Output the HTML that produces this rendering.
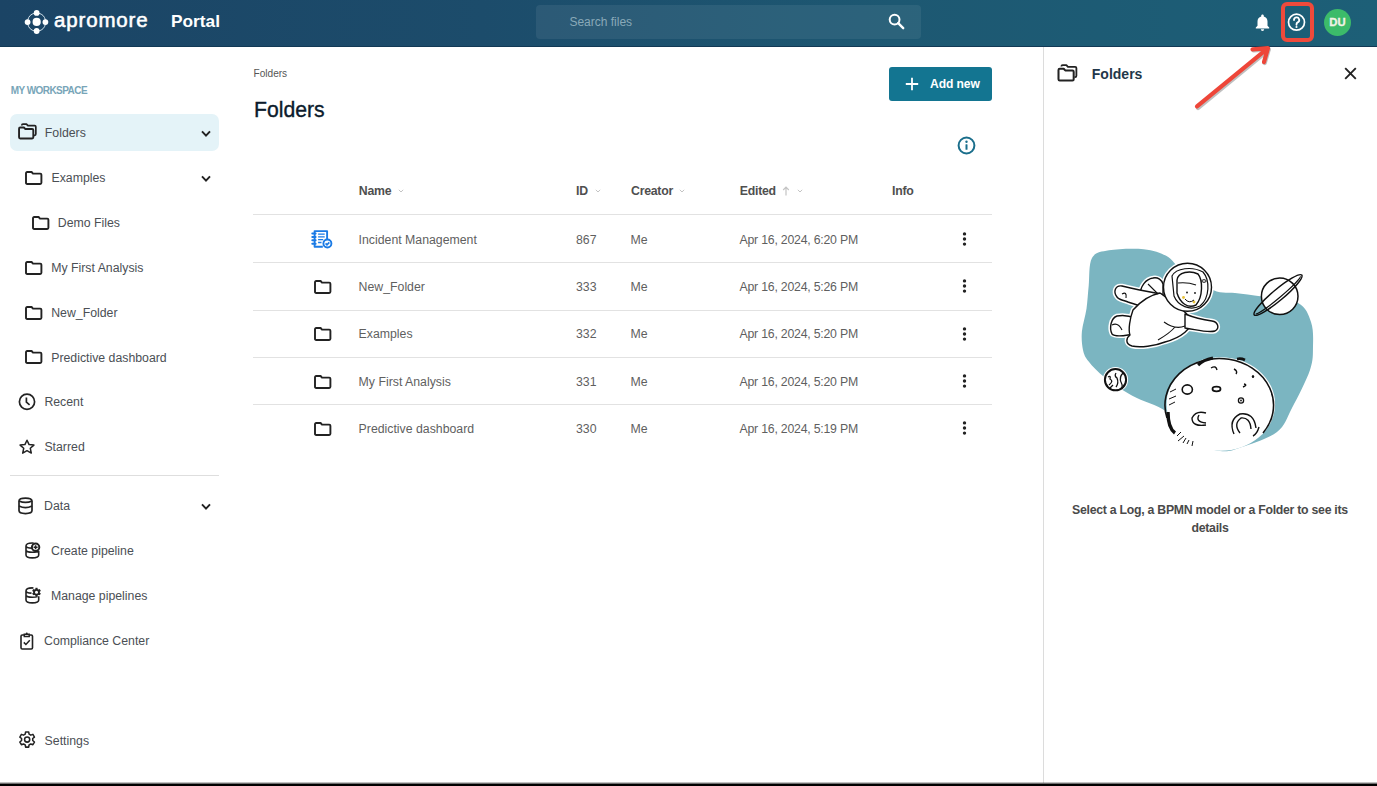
<!DOCTYPE html>
<html><head><meta charset="utf-8">
<style>
*{box-sizing:border-box;margin:0;padding:0}
html,body{width:1377px;height:786px;overflow:hidden;background:#fff;font-family:"Liberation Sans",sans-serif;color:#4a4a4a}
.abs{position:absolute}
#hdr{position:absolute;left:0;top:0;width:1377px;height:46.6px;background:linear-gradient(90deg,#1b4465 0%,#1c4c6b 35%,#1d5872 65%,#1d5f77 100%);border-bottom:1.3px solid #123955}
.t{position:absolute;white-space:nowrap;line-height:1}
svg{position:absolute;overflow:visible}
.st{position:absolute;white-space:nowrap;line-height:1;font-size:12.3px;color:#4b4f55}
.row-line{position:absolute;left:253px;width:739px;height:1px;background:#e2e2e2}
.cell{position:absolute;white-space:nowrap;line-height:1;font-size:12.3px;color:#5f5f5f}
.th{position:absolute;white-space:nowrap;line-height:1;font-size:12.3px;font-weight:700;color:#4f4f4f;letter-spacing:-0.25px}
.car{position:absolute}
</style></head><body>
<div id="hdr"></div>
<svg style="left:0;top:0" width="60" height="46" viewBox="0 0 60 46">
  <g fill="none" stroke="#d0e0ea" stroke-width="1">
    <path d="M38.6 13.2A9 9 0 0 1 45.4 20"/><path d="M45.4 24.2A9 9 0 0 1 38.6 31"/>
    <path d="M34.7 31A9 9 0 0 1 27.8 24.2"/><path d="M27.8 20A9 9 0 0 1 34.7 13.2"/>
  </g>
  <g fill="#fff">
    <circle cx="36.65" cy="21.9" r="4.1"/><circle cx="36.65" cy="12.9" r="2.9"/><circle cx="36.65" cy="31" r="2.9"/>
    <circle cx="27.6" cy="22.1" r="2.9"/><circle cx="45.4" cy="22.1" r="2.9"/>
  </g>
</svg>
<div class="t" style="left:54px;top:10px;font-size:20.5px;color:#fff;letter-spacing:0.85px;-webkit-text-stroke:0.55px #fff">apromore</div>
<div class="t" style="left:171px;top:13.1px;font-size:17.3px;font-weight:700;color:#fff">Portal</div>
<div class="abs" style="left:536px;top:5px;width:385px;height:34px;background:rgba(255,255,255,0.07);border-radius:4px"></div>
<div class="t" style="left:569.4px;top:16px;font-size:12px;color:#89a9b8">Search files</div>
<svg style="left:888px;top:13px" width="17" height="17" viewBox="0 0 17 17"><circle cx="6.6" cy="6.6" r="4.9" fill="none" stroke="#fff" stroke-width="2"/><path d="M10.2 10.2L15.2 15.2" stroke="#fff" stroke-width="2.4" stroke-linecap="round"/></svg>
<svg style="left:1255px;top:13.5px" width="15" height="18" viewBox="0 0 15 18"><path d="M7.5 0.6C6.7 0.6 6.2 1.2 6.2 1.9V2.5C3.8 3.1 2.5 5.2 2.5 7.6V11.8L0.8 13.6V14.4H14.2V13.6L12.5 11.8V7.6C12.5 5.2 11.2 3.1 8.8 2.5V1.9C8.8 1.2 8.3 0.6 7.5 0.6Z" fill="#fff"/><path d="M5.8 15.3H9.2A1.7 1.7 0 0 1 5.8 15.3Z" fill="#fff"/></svg>
<svg style="left:1287px;top:13px" width="19" height="19" viewBox="0 0 19 19"><circle cx="9.5" cy="9.2" r="8" fill="none" stroke="#fff" stroke-width="1.7"/><path d="M7 7.1A2.6 2.6 0 1 1 10.7 9.4C9.9 9.8 9.5 10.3 9.5 11.2V11.8" fill="none" stroke="#fff" stroke-width="1.8" stroke-linecap="round"/><circle cx="9.5" cy="14" r="1.05" fill="#fff"/></svg>
<div class="abs" style="left:1280.5px;top:1.8px;width:33px;height:40px;border:4.6px solid #ef4a3b;border-radius:6px"></div>
<div class="abs" style="left:1324px;top:8.7px;width:27px;height:27px;border-radius:50%;background:#3cbb6a"></div>
<div class="t" style="left:1324px;top:16.5px;width:27px;text-align:center;font-size:11.3px;font-weight:700;color:#f2f2e6;-webkit-text-stroke:0.3px #f2f2e6">DU</div>

<div class="t" style="left:10.7px;top:85.6px;font-size:10px;font-weight:700;color:#78a5b8;letter-spacing:-0.55px">MY WORKSPACE</div>
<div class="abs" style="left:10px;top:113.5px;width:208.5px;height:37px;background:#e4f3f8;border-radius:7px"></div>
<svg style="left:18px;top:123px" width="19" height="17" viewBox="0 0 18 16"><path d="M1 13.5V5.3Q1 4.2 2.1 4.2H5.6L7 5.7H13.4Q14.5 5.7 14.5 6.8V13.5Q14.5 14.6 13.4 14.6H2.1Q1 14.6 1 13.5Z" fill="none" stroke="#222" stroke-width="1.8" stroke-linejoin="round"/><path d="M3.6 2.3V2.1Q3.6 1 4.7 1H8L9.4 2.5H15.8Q16.9 2.5 16.9 3.6V10.4Q16.9 11.6 15.8 11.6H15.2" fill="none" stroke="#222" stroke-width="1.6" stroke-linejoin="round"/></svg>
<div class="st" style="left:44.8px;top:127.0px">Folders</div>
<svg style="left:200.5px;top:129.5px" width="10" height="7" viewBox="0 0 10 7"><path d="M1 1.3L5 5.6L9 1.3" fill="none" stroke="#222" stroke-width="1.9"/></svg>
<svg style="left:24.5px;top:170.5px" width="18" height="14" viewBox="0 0 18 14"><path d="M1 11.8V2.2Q1 1 2.2 1H6.6L8 2.6H15.2Q16.4 2.6 16.4 3.8V11.8Q16.4 13 15.2 13H2.2Q1 13 1 11.8Z" fill="none" stroke="#222" stroke-width="1.9" stroke-linejoin="round"/></svg>
<div class="st" style="left:51.5px;top:172.0px">Examples</div>
<svg style="left:200.5px;top:174.5px" width="10" height="7" viewBox="0 0 10 7"><path d="M1 1.3L5 5.6L9 1.3" fill="none" stroke="#222" stroke-width="1.9"/></svg>
<svg style="left:31.5px;top:215.5px" width="18" height="14" viewBox="0 0 18 14"><path d="M1 11.8V2.2Q1 1 2.2 1H6.6L8 2.6H15.2Q16.4 2.6 16.4 3.8V11.8Q16.4 13 15.2 13H2.2Q1 13 1 11.8Z" fill="none" stroke="#222" stroke-width="1.9" stroke-linejoin="round"/></svg>
<div class="st" style="left:57.8px;top:217.0px">Demo Files</div>
<svg style="left:24.5px;top:260.5px" width="18" height="14" viewBox="0 0 18 14"><path d="M1 11.8V2.2Q1 1 2.2 1H6.6L8 2.6H15.2Q16.4 2.6 16.4 3.8V11.8Q16.4 13 15.2 13H2.2Q1 13 1 11.8Z" fill="none" stroke="#222" stroke-width="1.9" stroke-linejoin="round"/></svg>
<div class="st" style="left:51.2px;top:262.0px">My First Analysis</div>
<svg style="left:24.5px;top:305.5px" width="18" height="14" viewBox="0 0 18 14"><path d="M1 11.8V2.2Q1 1 2.2 1H6.6L8 2.6H15.2Q16.4 2.6 16.4 3.8V11.8Q16.4 13 15.2 13H2.2Q1 13 1 11.8Z" fill="none" stroke="#222" stroke-width="1.9" stroke-linejoin="round"/></svg>
<div class="st" style="left:51.2px;top:307.0px">New_Folder</div>
<svg style="left:24.5px;top:350.0px" width="18" height="14" viewBox="0 0 18 14"><path d="M1 11.8V2.2Q1 1 2.2 1H6.6L8 2.6H15.2Q16.4 2.6 16.4 3.8V11.8Q16.4 13 15.2 13H2.2Q1 13 1 11.8Z" fill="none" stroke="#222" stroke-width="1.9" stroke-linejoin="round"/></svg>
<div class="st" style="left:51.2px;top:351.5px">Predictive dashboard</div>
<svg style="left:18px;top:393px" width="18" height="18" viewBox="0 0 18 18"><circle cx="9" cy="8.8" r="7.6" fill="none" stroke="#222" stroke-width="1.7"/><path d="M8.4 4.6V9.2L11.6 11.8" fill="none" stroke="#222" stroke-width="1.7"/></svg>
<div class="st" style="left:44.4px;top:396.2px">Recent</div>
<svg style="left:18px;top:438.5px" width="18" height="16" viewBox="0 0 18 16"><path d="M9 1.2L11.1 5.6L15.9 6.1L12.3 9.3L13.3 14.1L9 11.7L4.7 14.1L5.7 9.3L2.1 6.1L6.9 5.6Z" fill="none" stroke="#222" stroke-width="1.5" stroke-linejoin="round"/></svg>
<div class="st" style="left:44.4px;top:441.2px">Starred</div>
<div class="abs" style="left:10px;top:475px;width:209px;height:1px;background:#dedede"></div>
<svg style="left:18px;top:497px" width="16" height="18" viewBox="0 0 16 18"><path d="M1 4.1Q1 1.1 7.5 1.1Q14 1.1 14 4.1V13.6Q14 16.6 7.5 16.6Q1 16.6 1 13.6Z" fill="none" stroke="#222" stroke-width="1.7"/><path d="M1 3.9Q7.5 7 14 3.9M1 9Q7.5 12.2 14 9" fill="none" stroke="#222" stroke-width="1.7"/></svg>
<div class="st" style="left:44px;top:500.0px">Data</div>
<svg style="left:200.5px;top:502.5px" width="10" height="7" viewBox="0 0 10 7"><path d="M1 1.3L5 5.6L9 1.3" fill="none" stroke="#222" stroke-width="1.9"/></svg>
<svg style="left:25px;top:542px" width="17" height="17" viewBox="0 0 17 17"><path d="M8.6 1.3Q8 1 7.3 1Q1 1 1 4V13Q1 15.9 7.3 15.9Q13.7 15.9 13.7 13V8.8M1 4.2Q1.5 6 7 6.1M1 8.3Q1.5 10.3 7.3 10.3Q12 10.3 13.7 9" fill="none" stroke="#222" stroke-width="1.6"/><circle cx="10.6" cy="5.2" r="3.7" fill="#fff" stroke="#222" stroke-width="2"/><path d="M10.6 3.2V7.2M8.6 5.2H12.6" stroke="#222" stroke-width="1.5"/></svg>
<div class="st" style="left:51px;top:545.0px">Create pipeline</div>
<svg style="left:25px;top:587px" width="17" height="17" viewBox="0 0 17 17"><path d="M8.4 1.2Q7.8 0.9 7.3 0.9Q1 0.9 1 4V13Q1 15.9 7.3 15.9Q13.7 15.9 13.7 13V9.2M1 4.2Q1.5 6 6.5 6.1M1 8.3Q1.5 10.3 7.3 10.3Q11 10.3 12.5 9.6" fill="none" stroke="#222" stroke-width="1.6"/><g transform="translate(11.5 5.2)"><circle r="3.3" fill="#222"/><rect x="-1.1" y="-4.4" width="2.2" height="8.8" fill="#222"/><rect x="-1.1" y="-4.4" width="2.2" height="8.8" fill="#222" transform="rotate(60)"/><rect x="-1.1" y="-4.4" width="2.2" height="8.8" fill="#222" transform="rotate(120)"/><circle r="1.5" fill="#fff"/></g></svg>
<div class="st" style="left:51px;top:590.0px">Manage pipelines</div>
<svg style="left:19.5px;top:631.5px" width="14" height="18" viewBox="0 0 14 18"><path d="M4 3H2.2Q1 3 1 4.2V15.8Q1 17 2.2 17H11.3Q12.5 17 12.5 15.8V4.2Q12.5 3 11.3 3H9.5" fill="none" stroke="#222" stroke-width="1.6"/><path d="M4.3 2.3H9.2V4.6H4.3Z" fill="none" stroke="#222" stroke-width="1.5"/><circle cx="6.75" cy="1.5" r="1" fill="#222"/><path d="M3.8 10.4L5.9 12.5L9.8 8.3" fill="none" stroke="#222" stroke-width="1.5"/></svg>
<div class="st" style="left:44px;top:635.0px">Compliance Center</div>
<svg style="left:18.8px;top:731px" width="16.3" height="17.3" viewBox="0 0 17 18"><path d="M6.9 1H10.1L10.5 3.3L12.3 4.3L14.5 3.5L16.1 6.3L14.3 7.8V9.9L16.1 11.5L14.5 14.3L12.3 13.5L10.5 14.5L10.1 16.8H6.9L6.5 14.5L4.7 13.5L2.5 14.3L0.9 11.5L2.7 9.9V7.8L0.9 6.3L2.5 3.5L4.7 4.3L6.5 3.3Z" fill="none" stroke="#222" stroke-width="1.6" stroke-linejoin="round"/><circle cx="8.5" cy="8.9" r="2.7" fill="none" stroke="#222" stroke-width="1.6"/></svg>
<div class="st" style="left:44.6px;top:734.9px">Settings</div>

<div class="t" style="left:253.5px;top:69.3px;font-size:10.1px;color:#555">Folders</div>
<div class="t" style="left:254px;top:98.7px;font-size:21.2px;color:#0c1b2c;-webkit-text-stroke:0.35px #0c1b2c">Folders</div>
<div class="abs" style="left:889px;top:67px;width:103px;height:34px;background:#137591;border-radius:3px"></div>
<svg style="left:905px;top:77px" width="14" height="14" viewBox="0 0 14 14"><path d="M7 0.8V13.2M0.8 7H13.2" stroke="#fff" stroke-width="1.8"/></svg>
<div class="t" style="left:930px;top:78.2px;font-size:12.1px;font-weight:700;color:#fff;letter-spacing:-0.1px">Add new</div>
<svg style="left:957px;top:136px" width="19" height="19" viewBox="0 0 19 19"><circle cx="9.5" cy="9.5" r="7.9" fill="none" stroke="#1a6e8b" stroke-width="2"/><rect x="8.5" y="8.2" width="2" height="5.6" rx="0.6" fill="#1a6e8b"/><circle cx="9.5" cy="5.7" r="1.2" fill="#1a6e8b"/></svg>

<div class="th" style="left:358.8px;top:185.4px">Name</div>
<div class="th" style="left:576px;top:185.4px">ID</div>
<div class="th" style="left:631px;top:185.4px">Creator</div>
<div class="th" style="left:739.8px;top:185.4px">Edited</div>
<div class="th" style="left:892px;top:185.4px">Info</div>
<svg style="left:0;top:0" width="1" height="1" viewBox="0 0 1 1"></svg>
<svg style="left:398px;top:189px" width="6" height="4" viewBox="0 0 6 4"><path d="M0.8 0.8L3 3L5.2 0.8" fill="none" stroke="#c4c4c4" stroke-width="1"/></svg>
<svg style="left:594.5px;top:189px" width="6" height="4" viewBox="0 0 6 4"><path d="M0.8 0.8L3 3L5.2 0.8" fill="none" stroke="#c4c4c4" stroke-width="1"/></svg>
<svg style="left:678.5px;top:189px" width="6" height="4" viewBox="0 0 6 4"><path d="M0.8 0.8L3 3L5.2 0.8" fill="none" stroke="#c4c4c4" stroke-width="1"/></svg>
<svg style="left:797px;top:189px" width="6" height="4" viewBox="0 0 6 4"><path d="M0.8 0.8L3 3L5.2 0.8" fill="none" stroke="#c4c4c4" stroke-width="1"/></svg>
<svg style="left:782px;top:186px" width="8" height="10" viewBox="0 0 8 10"><path d="M4 1.2V9.5M1.2 4L4 1.2L6.8 4" fill="none" stroke="#c4c4c4" stroke-width="1.2"/></svg>
<div class="row-line" style="top:214px"></div>
<div class="row-line" style="top:262px"></div>
<div class="row-line" style="top:309.5px"></div>
<div class="row-line" style="top:356.5px"></div>
<div class="row-line" style="top:404px"></div>
<svg style="left:311px;top:229px" width="22" height="21" viewBox="0 0 22 21"><path d="M16.1 10.2V2.1H3.6V17.7H11.8" fill="none" stroke="#1b7be5" stroke-width="1.9" stroke-linejoin="round"/><path d="M1.3 4.5H4.6M1.3 7.9H4.6M1.3 11.3H4.6M1.3 14.7H4.6" stroke="#1b7be5" stroke-width="2" stroke-linecap="round"/><path d="M7.1 5.1H13.7M7.1 7.9H13.7M7.1 10.6H12.2M7.1 13.5H10.5" stroke="#1b7be5" stroke-width="1.4"/><circle cx="16.4" cy="14.5" r="4" fill="#fff" stroke="#1b7be5" stroke-width="1.9"/><path d="M14.6 14.3L16 15.8L18.3 13.3" fill="none" stroke="#1b7be5" stroke-width="1.7"/></svg>
<div class="cell" style="left:358.6px;top:233.6px">Incident Management</div>
<div class="cell" style="left:576px;top:233.6px">867</div>
<div class="cell" style="left:630.5px;top:233.6px">Me</div>
<div class="cell" style="left:739.5px;top:233.6px;letter-spacing:-0.22px">Apr 16, 2024, 6:20 PM</div>
<svg style="left:961px;top:231.2px" width="7" height="16" viewBox="0 0 7 16"><circle cx="3.5" cy="2.9" r="1.7" fill="#222"/><circle cx="3.5" cy="8" r="1.7" fill="#222"/><circle cx="3.5" cy="13.1" r="1.7" fill="#222"/></svg>
<svg style="left:313.8px;top:280.2px" width="18" height="14" viewBox="0 0 18 14"><path d="M1 11.8V2.2Q1 1 2.2 1H6.6L8 2.6H15.2Q16.4 2.6 16.4 3.8V11.8Q16.4 13 15.2 13H2.2Q1 13 1 11.8Z" fill="none" stroke="#222" stroke-width="1.9" stroke-linejoin="round"/></svg>
<div class="cell" style="left:358.6px;top:281.0px">New_Folder</div>
<div class="cell" style="left:576px;top:281.0px">333</div>
<div class="cell" style="left:630.5px;top:281.0px">Me</div>
<div class="cell" style="left:739.5px;top:281.0px;letter-spacing:-0.22px">Apr 16, 2024, 5:26 PM</div>
<svg style="left:961px;top:278.4px" width="7" height="16" viewBox="0 0 7 16"><circle cx="3.5" cy="2.9" r="1.7" fill="#222"/><circle cx="3.5" cy="8" r="1.7" fill="#222"/><circle cx="3.5" cy="13.1" r="1.7" fill="#222"/></svg>
<svg style="left:313.8px;top:327.4px" width="18" height="14" viewBox="0 0 18 14"><path d="M1 11.8V2.2Q1 1 2.2 1H6.6L8 2.6H15.2Q16.4 2.6 16.4 3.8V11.8Q16.4 13 15.2 13H2.2Q1 13 1 11.8Z" fill="none" stroke="#222" stroke-width="1.9" stroke-linejoin="round"/></svg>
<div class="cell" style="left:358.6px;top:328.4px">Examples</div>
<div class="cell" style="left:576px;top:328.4px">332</div>
<div class="cell" style="left:630.5px;top:328.4px">Me</div>
<div class="cell" style="left:739.5px;top:328.4px;letter-spacing:-0.22px">Apr 16, 2024, 5:20 PM</div>
<svg style="left:961px;top:325.6px" width="7" height="16" viewBox="0 0 7 16"><circle cx="3.5" cy="2.9" r="1.7" fill="#222"/><circle cx="3.5" cy="8" r="1.7" fill="#222"/><circle cx="3.5" cy="13.1" r="1.7" fill="#222"/></svg>
<svg style="left:313.8px;top:374.6px" width="18" height="14" viewBox="0 0 18 14"><path d="M1 11.8V2.2Q1 1 2.2 1H6.6L8 2.6H15.2Q16.4 2.6 16.4 3.8V11.8Q16.4 13 15.2 13H2.2Q1 13 1 11.8Z" fill="none" stroke="#222" stroke-width="1.9" stroke-linejoin="round"/></svg>
<div class="cell" style="left:358.6px;top:375.8px">My First Analysis</div>
<div class="cell" style="left:576px;top:375.8px">331</div>
<div class="cell" style="left:630.5px;top:375.8px">Me</div>
<div class="cell" style="left:739.5px;top:375.8px;letter-spacing:-0.22px">Apr 16, 2024, 5:20 PM</div>
<svg style="left:961px;top:372.8px" width="7" height="16" viewBox="0 0 7 16"><circle cx="3.5" cy="2.9" r="1.7" fill="#222"/><circle cx="3.5" cy="8" r="1.7" fill="#222"/><circle cx="3.5" cy="13.1" r="1.7" fill="#222"/></svg>
<svg style="left:313.8px;top:421.8px" width="18" height="14" viewBox="0 0 18 14"><path d="M1 11.8V2.2Q1 1 2.2 1H6.6L8 2.6H15.2Q16.4 2.6 16.4 3.8V11.8Q16.4 13 15.2 13H2.2Q1 13 1 11.8Z" fill="none" stroke="#222" stroke-width="1.9" stroke-linejoin="round"/></svg>
<div class="cell" style="left:358.6px;top:423.2px">Predictive dashboard</div>
<div class="cell" style="left:576px;top:423.2px">330</div>
<div class="cell" style="left:630.5px;top:423.2px">Me</div>
<div class="cell" style="left:739.5px;top:423.2px;letter-spacing:-0.22px">Apr 16, 2024, 5:19 PM</div>
<svg style="left:961px;top:420.0px" width="7" height="16" viewBox="0 0 7 16"><circle cx="3.5" cy="2.9" r="1.7" fill="#222"/><circle cx="3.5" cy="8" r="1.7" fill="#222"/><circle cx="3.5" cy="13.1" r="1.7" fill="#222"/></svg>

<div class="abs" style="left:1042.5px;top:47px;width:1.5px;height:736px;background:#dcdcdc"></div>
<svg style="left:1057px;top:63.5px" width="21" height="18" viewBox="0 0 18 16"><path d="M1 13.5V5.3Q1 4.2 2.1 4.2H5.6L7 5.7H13.4Q14.5 5.7 14.5 6.8V13.5Q14.5 14.6 13.4 14.6H2.1Q1 14.6 1 13.5Z" fill="none" stroke="#222" stroke-width="1.8" stroke-linejoin="round"/><path d="M3.6 2.3V2.1Q3.6 1 4.7 1H8L9.4 2.5H15.8Q16.9 2.5 16.9 3.6V10.4Q16.9 11.6 15.8 11.6H15.2" fill="none" stroke="#222" stroke-width="1.6" stroke-linejoin="round"/></svg>
<div class="t" style="left:1091.8px;top:67px;font-size:14px;font-weight:700;color:#22374a">Folders</div>
<svg style="left:1344px;top:67px" width="13" height="13" viewBox="0 0 13 13"><path d="M1.2 1.2L11.8 11.8M11.8 1.2L1.2 11.8" stroke="#222" stroke-width="1.9"/></svg>
<svg style="left:0;top:0" width="1377" height="786" viewBox="0 0 1377 786">
<path d="M1092.0 258.0C1095.4 252.1 1100.4 251.8 1109.0 250.3C1117.6 248.8 1134.1 248.2 1143.7 249.2C1153.3 250.1 1160.5 252.9 1166.6 256.0C1172.6 259.1 1172.3 262.3 1180.0 268.0C1187.7 273.7 1203.8 285.8 1213.0 290.0C1222.2 294.2 1226.8 291.9 1235.0 293.0C1243.2 294.1 1251.5 294.8 1262.0 296.5C1272.5 298.2 1289.8 298.8 1298.0 303.0C1306.2 307.2 1308.5 314.8 1311.0 322.0C1313.5 329.2 1313.2 338.0 1313.0 346.0C1312.8 354.0 1313.5 359.7 1310.0 370.0C1306.5 380.3 1297.5 397.7 1292.0 408.0C1286.5 418.3 1285.3 425.5 1277.0 432.0C1268.7 438.5 1251.5 443.8 1242.0 447.0C1232.5 450.2 1228.7 452.2 1220.0 451.0C1211.3 449.8 1198.9 446.5 1190.0 440.0C1181.1 433.5 1176.2 419.2 1166.6 411.8C1157.0 404.4 1142.6 401.4 1132.3 395.7C1122.0 390.0 1112.1 383.1 1104.8 377.4C1097.5 371.7 1092.3 366.0 1088.7 361.4C1085.1 356.8 1084.1 354.9 1083.0 349.9C1081.9 344.9 1081.3 338.5 1081.9 331.6C1082.5 324.7 1085.4 316.3 1086.5 308.7C1087.6 301.1 1087.8 294.2 1088.7 285.8C1089.6 277.4 1088.6 263.9 1092.0 258.0Z" fill="#7bb5c1"/>
<!-- moon -->
<ellipse cx="1220.8" cy="404" rx="54.3" ry="46.8" fill="#fff"/>
<path d="M1167 418A54.3 46.8 0 1 1 1263 433" fill="none" stroke="#111" stroke-width="1.6"/>
<path d="M1198 365Q1203 360 1213 358" fill="none" stroke="#111" stroke-width="3.2"/>
<path d="M1237 359Q1241 358 1245 360" fill="none" stroke="#111" stroke-width="2.6"/>
<path d="M1168 412Q1168 428 1175 433" fill="none" stroke="#111" stroke-width="3.4"/>
<path d="M1170 392L1176 389M1169 399L1176 396M1169 405L1175 402M1177 436L1181 432M1178 441L1184 436M1183 443L1186 438M1187 444L1189 440M1192 446L1193 441" stroke="#111" stroke-width="1"/>
<ellipse cx="1187.3" cy="389.5" rx="5.1" ry="4.6" fill="none" stroke="#111" stroke-width="1.6"/>
<ellipse cx="1216.5" cy="389" rx="4" ry="2.3" fill="none" stroke="#111" stroke-width="1.8"/>
<path d="M1211 368Q1216 365 1217 370M1234 369Q1238 371 1236 374M1244 384Q1248 385 1243 387" fill="none" stroke="#111" stroke-width="1.4"/>
<ellipse cx="1253" cy="376.5" rx="1.2" ry="1.6" fill="#111"/>
<circle cx="1241" cy="400.5" r="2.6" fill="none" stroke="#111" stroke-width="1.3"/><circle cx="1241" cy="400.5" r="0.9" fill="#111"/>
<path d="M1206 413Q1196 410 1192 418Q1192 427 1206 425M1199 415Q1195 422 1206 423" fill="none" stroke="#111" stroke-width="1.4"/>
<path d="M1234 434Q1228 420 1240 414Q1254 412 1256 428M1240 433Q1233 424 1241 418Q1250 417 1251 429M1253 436Q1257 434 1259 427" fill="none" stroke="#111" stroke-width="1.4"/>
<!-- earth -->
<circle cx="1115.5" cy="379.7" r="12.6" fill="#fff"/>
<circle cx="1115.5" cy="379.7" r="10.6" fill="#fff" stroke="#111" stroke-width="2"/>
<path d="M1108 377Q1111 375 1110 379Q1114 381 1109 385M1116 373Q1114 376 1117 378Q1119 383 1116 387M1123 373Q1119 377 1121 382Q1123 385 1122 389M1110 388L1113 385" fill="none" stroke="#111" stroke-width="1.3"/>
<!-- saturn -->
<circle cx="1279.7" cy="296.3" r="18.3" fill="#fff" stroke="#111" stroke-width="1.5"/>
<g transform="rotate(-40 1278 295)">
<ellipse cx="1278" cy="295" rx="31" ry="5.6" fill="none" stroke="#111" stroke-width="1.5"/>
<path d="M1249 295A29 3 0 0 0 1307 295" fill="none" stroke="#111" stroke-width="1.2"/>
</g>
<!-- astronaut -->
<g stroke="#fff" stroke-width="4.5" fill="#fff" stroke-linejoin="round">
<path d="M1140 296C1140 286 1146 279 1153 278C1158 277 1162 280 1163 284L1163 296Z"/>
<path d="M1161 294C1150 292 1130 288 1122 286C1115 285 1113 292 1117 297C1119 300 1123 300 1128 302C1138 305 1148 309 1157 311Z"/>
<path d="M1135 318C1130 316 1122 315 1117 316C1111 318 1109 328 1112 334C1115 337 1122 336 1128 335C1135 334 1140 333 1145 332Z"/>
<path d="M1160 293C1170 300 1185 310 1190 318C1195 328 1180 338 1165 342C1155 346 1140 348 1132 346C1125 344 1126 338 1130 335C1128 330 1130 318 1133 310C1140 302 1150 295 1160 293Z"/>
<path d="M1185 314C1195 318 1205 320 1212 321C1218 322 1220 328 1215 331C1208 333 1198 330 1185 328Z"/>
<circle cx="1187.5" cy="287.3" r="24"/>
</g>
<g stroke="#111" stroke-width="1.4" fill="#fff" stroke-linejoin="round">
<path d="M1140 296C1140 286 1146 279 1153 278C1158 277 1162 280 1163 284L1163 296Z"/>
<path d="M1161 294C1150 292 1130 288 1122 286C1115 285 1113 292 1117 297C1119 300 1123 300 1128 302C1138 305 1148 309 1157 311Z"/>
<path d="M1135 318C1130 316 1122 315 1117 316C1111 318 1109 328 1112 334C1115 337 1122 336 1128 335C1135 334 1140 333 1145 332Z"/>
<path d="M1160 293C1170 300 1185 310 1190 318C1195 328 1180 338 1165 342C1155 346 1140 348 1132 346C1125 344 1126 338 1130 335C1128 330 1130 318 1133 310C1140 302 1150 295 1160 293Z"/>
<path d="M1185 314C1195 318 1205 320 1212 321C1218 322 1220 328 1215 331C1208 333 1198 330 1185 328Z"/>
<circle cx="1187.5" cy="287.3" r="24"/>
<path d="M1172 276C1176 268 1192 266 1203 272C1210 280 1210 298 1200 306C1190 311 1178 306 1174 296Z" fill="none" stroke-width="1.2"/>
<path d="M1177 280C1178 272 1190 270 1198 274C1203 280 1203 297 1196 305C1188 309 1180 303 1177 293Z"/>
</g>
<g fill="none" stroke="#111" stroke-width="1.1">
<path d="M1178 283Q1188 282 1196 285M1122 294Q1127 291 1126 298M1164 322Q1175 330 1185 326M1158 340Q1170 333 1175 327M1112 325Q1118 322 1122 330M1148 284L1158 294"/>
</g>
<circle cx="1183.5" cy="297.5" r="1.4" fill="#e8c23a"/><circle cx="1194" cy="302" r="1.4" fill="#e8c23a"/>
<path d="M1185 299Q1189 304 1194 300" fill="none" stroke="#111" stroke-width="1"/>
<circle cx="1187" cy="292.5" r="0.9" fill="#111"/><circle cx="1195" cy="293" r="0.9" fill="#111"/>
<ellipse cx="1204" cy="281" rx="2.2" ry="1.3" fill="none" stroke="#111" stroke-width="1"/>
</svg>
<div class="t" style="left:1050px;top:501px;width:320px;text-align:center;font-size:12.3px;font-weight:700;color:#4a4a4a;line-height:18px;white-space:normal;letter-spacing:-0.27px">Select a Log, a BPMN model or a Folder to see its<br>details</div>

<svg style="left:0;top:0" width="1377" height="786" viewBox="0 0 1377 786">
<g fill="none" stroke-linecap="round" stroke-linejoin="round">
<path d="M1197.5 107L1268 49M1253 49.5L1268 48.5L1264 62" stroke="rgba(0,0,0,0.25)" stroke-width="4.6" transform="translate(0.6,0.8)"/>
<path d="M1197 106.3L1268 48.2M1252.5 49.3L1268 48.2L1264 62" stroke="#ee4639" stroke-width="4.2"/>
</g></svg>
<div class="abs" style="left:0;top:782px;width:1377px;height:4px;background:linear-gradient(180deg,rgba(0,0,0,0.08) 0%,rgba(0,0,0,0.6) 40%,#000 62%)"></div>
</body></html>
